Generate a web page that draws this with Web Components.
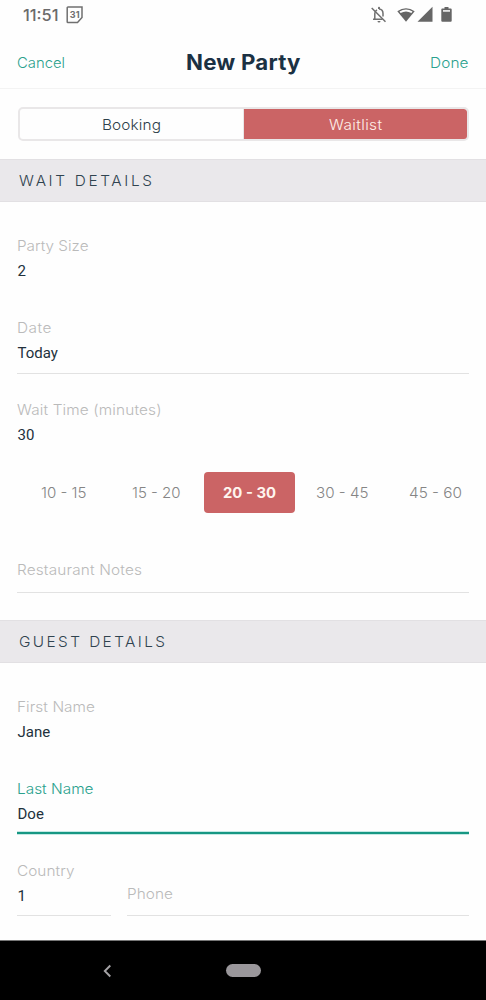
<!DOCTYPE html>
<html lang="en">
<head>
<meta charset="utf-8">
<title>New Party</title>
<style>
html,body{margin:0;padding:0;background:#fefefe}
body{font-family:Inter,"Open Sans",sans-serif;font-weight:350;color:#22333f;width:486px;height:1000px;overflow:hidden}
</style>
</head>
<body>
<party-screen></party-screen>
<script>
const define=(name,html,setup)=>{
  const t=document.createElement('template');
  t.innerHTML=html;
  customElements.define(name,class extends HTMLElement{
    connectedCallback(){
      if(this.shadowRoot)return;
      this.attachShadow({mode:'open'}).append(t.content.cloneNode(true));
      if(setup)setup(this,this.shadowRoot);
    }
  });
};

/* Text slightly widened, then tracked, so that its line spans the width given in "w". */
define('tracked-text',`<style>:host{display:inline-block;white-space:pre;vertical-align:top;text-align:left}span{display:inline-block;transform-origin:0 50%}</style><span></span>`,(el,root)=>{
  const s=root.querySelector('span'),text=el.getAttribute('text');
  s.textContent=text;
  const w=parseFloat(el.getAttribute('w'));
  const natural=s.getBoundingClientRect().width;
  const scale=Math.min(1.06,w/natural);
  const gap=(w/scale-natural)/(text.length-1);
  s.style.letterSpacing=gap.toFixed(3)+'px';
  s.style.transform='scaleX('+scale.toFixed(4)+')';
  el.style.width=w+'px';
});

define('status-bar',`<style>
:host{display:flex;height:30px;box-sizing:border-box;padding:0 33px 0 22.500px;align-items:center;color:#6b6b6b}
.time{font-size:16px;line-height:30px;font-weight:500}
svg{display:block;flex:none}
.cal{margin-left:7.500px}
.right{margin-left:auto;display:flex;align-items:center}
</style>
<tracked-text class="time" text="11:51" w="35.500"></tracked-text>
<svg class="cal" width="18" height="18" viewBox="0 0 18 18"><path d="M2 1h14v10.500L11.500 16.500H2A.8.8 0 0 1 1.200 15.700V1.800A.8.8 0 0 1 2 1z" fill="none" stroke="#707070" stroke-width="1.500"/><text x="8.700" y="12" text-anchor="middle" font-family="Inter,sans-serif" font-size="9" font-weight="700" fill="#707070" textLength="10">31</text></svg>
<div class="right">
<svg width="82" height="18" viewBox="0 0 82 18">
<g fill="none" stroke="#707070" stroke-width="1.500"><path d="M3.800 13.300V7.500Q3.800 5 6 3.800M8 3.100Q12 3.400 12 7.500V10.500M2 13.300H11.500"/><path d="M.7 2 14.500 15.800"/></g>
<path d="M6.500 15h3a1.500 1.500 0 0 1-3 0zM7 3V1.800a1 1 0 0 1 2 0V3z" fill="#707070"/>
<path d="M26.300 5.300Q35-.8 43.700 5.300L35 15.700z" fill="#666"/><path d="M28.500 5.600Q35 1.600 41.500 5.600L40.400 7Q35 3.800 29.600 7z" fill="#fff"/>
<path d="M61.500.8V15.700H46.500z" fill="#666"/>
<path d="M73.500 1h4v1.500h2.200q1 0 1 1v11.300q0 1-1 1h-8.400q-1 0-1-1V3.500q0-1 1-1h2.200z" fill="#666"/><path d="M72 4h7v1.800h-7z" fill="#e4e4e4"/>
</svg></div>`);

define('title-bar',`<style>
:host{display:grid;grid-template-columns:1fr auto 1fr;align-items:center;height:59px;box-sizing:border-box;border-bottom:1px solid #f3f3f3;padding:8px 17.500px 0 17px;margin-bottom:18px}
.act{font-size:14.500px;line-height:20px;color:#2aa18d;margin-top:-1px}
.r{justify-self:end}
.title{font-size:21px;line-height:30px;font-weight:700;color:#1b3143}
</style>
<tracked-text class="act" text="Cancel" w="48"></tracked-text>
<tracked-text class="title" text="New Party" w="114.500"></tracked-text>
<tracked-text class="act r" text="Done" w="38.500"></tracked-text>`);

define('segment-switch',`<style>
:host{display:grid;grid-template-columns:224px 1fr;height:34px;box-sizing:border-box;margin:0 17px 18px 17.500px;border:2px solid #e9e7e8;border-radius:5px;overflow:hidden;font-size:14.500px;line-height:31px;text-align:center}
.on{background:#cb6465;color:#fff0e9;border-radius:0 3px 3px 0}
.off{border-right:1px solid #e9e7e8;color:#2e3f4a}
</style>
<div class="off"><tracked-text text="Booking" w="59"></tracked-text></div>
<div class="on"><tracked-text text="Waitlist" w="53"></tracked-text></div>`);

define('section-head',`<style>
:host{display:block;height:43px;box-sizing:border-box;background:#eae8eb;border-top:1px solid #e2e0e3;border-bottom:1px solid #e2e0e3;padding-left:18.500px;font-size:14.500px;line-height:41px;color:#30434f}
</style><slot></slot>`);

define('form-field',`<style>
:host{display:block;height:57px;box-sizing:border-box;border-bottom:1px solid transparent}
:host([line]){border-color:#e2e2e2}
:host([active]){border-bottom:2px solid #179783;height:56px;margin-bottom:1px;box-shadow:0 1px 0 #c4e9e4,inset 0 -1px 0 #c4e9e4}
.label{height:20px;line-height:21px;font-size:14.500px;color:#bababa}
:host([active]) .label{color:#2aa18d}
.value{height:32px;font:400 15px/32px Roboto,sans-serif;color:#22313c;padding-left:.5px}
</style><div class="label"><slot></slot></div><div class="value"></div>`,(el,root)=>{root.querySelector('.value').textContent=el.getAttribute('value')||''});

define('time-chip',`<style>
:host{display:block;width:91px;height:41px;border-radius:4px;text-align:center;font-size:14.500px;line-height:41px;color:#858585;justify-self:center}
:host([selected]){background:#cb6465;color:#fff5ef;font-weight:700}
</style><slot></slot>`);

define('nav-bar',`<style>
:host{display:grid;grid-template-columns:1fr auto 1fr;align-items:center;height:60px;box-sizing:border-box;background:#000;border-top:1px solid #777}
svg{display:block;margin-left:103px}
.pill{width:35px;height:13px;border-radius:7px;background:#9a979b}
</style>
<svg width="9" height="14" viewBox="0 0 9 14"><path d="M7.300 1.500 1.800 7l5.500 5.500" fill="none" stroke="#a5a3a6" stroke-width="1.900"/></svg>
<div class="pill"></div><div></div>`);

define('party-screen',`<style>
:host{display:flex;flex-direction:column;height:1000px}
.fields{display:flex;flex-direction:column;gap:25px;padding:33px 17px 0 17px}
.chips{display:grid;grid-template-columns:repeat(5,93px);height:41px;margin:-4px -14px 0 0}
.notes{height:32px;border-bottom:1px solid #e2e2e2;margin-top:22px;font-size:14.500px;line-height:20px;color:#bababa}
.phone-row{display:grid;grid-template-columns:94px 1fr;gap:16px}
.phone{height:56px;box-sizing:border-box;border-bottom:1px solid #e2e2e2;padding-top:23px;font-size:14.500px;line-height:21px;color:#bababa}
.phone-row form-field{height:56px}
.second{margin-top:27px}
nav-bar{margin-top:auto}
</style>
<status-bar></status-bar>
<title-bar></title-bar>
<segment-switch></segment-switch>
<section-head><tracked-text text="WAIT DETAILS" w="133"></tracked-text></section-head>
<div class="fields">
<form-field value="2"><tracked-text text="Party Size" w="71.500"></tracked-text></form-field>
<form-field value="Today" line><tracked-text text="Date" w="34.500"></tracked-text></form-field>
<form-field value="30" style="height:52px"><tracked-text text="Wait Time (minutes)" w="144.500"></tracked-text></form-field>
<div class="chips">
<time-chip><tracked-text text="10 - 15" w="45.500"></tracked-text></time-chip>
<time-chip><tracked-text text="15 - 20" w="48.500"></tracked-text></time-chip>
<time-chip selected><tracked-text text="20 - 30" w="53"></tracked-text></time-chip>
<time-chip><tracked-text text="30 - 45" w="52.500"></tracked-text></time-chip>
<time-chip><tracked-text text="45 - 60" w="53"></tracked-text></time-chip>
</div>
<div class="notes"><tracked-text text="Restaurant Notes" w="125"></tracked-text></div>
</div>
<section-head class="second"><tracked-text text="GUEST DETAILS" w="146"></tracked-text></section-head>
<div class="fields">
<form-field value="Jane"><tracked-text text="First Name" w="78"></tracked-text></form-field>
<form-field value="Doe" active><tracked-text text="Last Name" w="76.500"></tracked-text></form-field>
<div class="phone-row">
<form-field value="1" line><tracked-text text="Country" w="57.500"></tracked-text></form-field>
<div class="phone"><tracked-text text="Phone" w="46"></tracked-text></div>
</div>
</div>
<nav-bar></nav-bar>`);
</script>
</body>
</html>
